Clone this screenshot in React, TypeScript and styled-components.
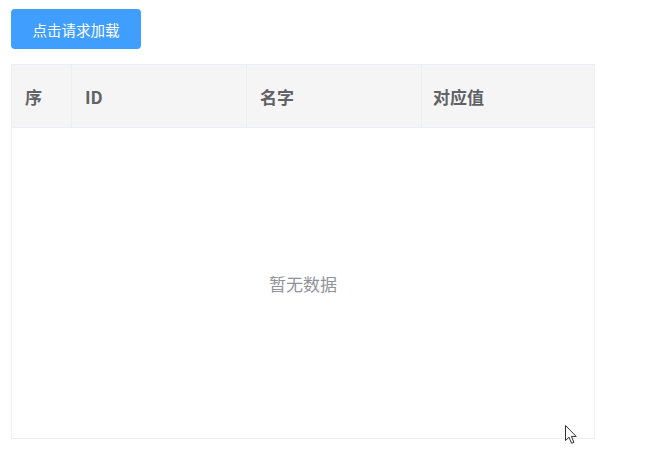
import React from "react";
import styled, { createGlobalStyle } from "styled-components";

const Global = createGlobalStyle`
  html, body { margin: 0; padding: 0; background: #fff; }
  body { font-family: "Noto Sans CJK SC", "Noto Sans", sans-serif; }
`;

const Page = styled.div`
  position: relative;
  width: 660px;
  height: 472px;
  padding: 9px 0 0 11px;
  box-sizing: border-box;
`;

const LoadButton = styled.button`
  width: 130px;
  height: 40px;
  border: none;
  border-radius: 4px;
  background: #409eff;
  color: #fff;
  font-family: "Noto Sans CJK SC", sans-serif;
  font-size: 14.5px;
  cursor: pointer;
  padding: 0;
  display: flex;
  align-items: center;
  justify-content: center;
`;

const Table = styled.div`
  margin-top: 15px;
  width: 584px;
  height: 375px;
  border: 1px solid #ebeef5;
  box-sizing: border-box;
  display: flex;
  flex-direction: column;
`;

const HeaderRow = styled.div`
  display: grid;
  grid-template-columns: 60px 175px 175px 1fr;
  height: 63px;
  background: #f5f5f6;
  border-bottom: 1px solid #ebeef5;
  box-sizing: border-box;
`;

const HeadCell = styled.div<{ $last?: boolean }>`
  display: flex;
  align-items: center;
  padding-left: ${(p) => (p.$last ? "11px" : "13px")};
  border-right: ${(p) => (p.$last ? "none" : "1px solid #ebeef5")};
  font-size: 17px;
  font-weight: 700;
  color: #606266;
`;

const EmptyBody = styled.div`
  flex: 1;
  display: flex;
  align-items: center;
  justify-content: center;
  font-size: 17px;
  color: #909399;
`;

const Cursor = styled.svg`
  position: absolute;
  left: 565px;
  top: 425px;
`;

export default function App() {
  return (
    <>
      <Global />
      <Page>
        <LoadButton>点击请求加载</LoadButton>
        <Table>
          <HeaderRow>
            <HeadCell>序</HeadCell>
            <HeadCell>ID</HeadCell>
            <HeadCell>名字</HeadCell>
            <HeadCell $last>对应值</HeadCell>
          </HeaderRow>
          <EmptyBody>暂无数据</EmptyBody>
        </Table>
        <Cursor width="14" height="20" viewBox="0 0 14 20">
          <path
            d="M0.5 0.5 L0.5 15.5 L4 12.2 L6.6 18.3 L8.9 17.3 L6.4 11.4 L11.2 11.4 Z"
            fill="#fff"
            stroke="#333"
            strokeWidth="1"
            strokeLinejoin="round"
          />
        </Cursor>
      </Page>
    </>
  );
}
